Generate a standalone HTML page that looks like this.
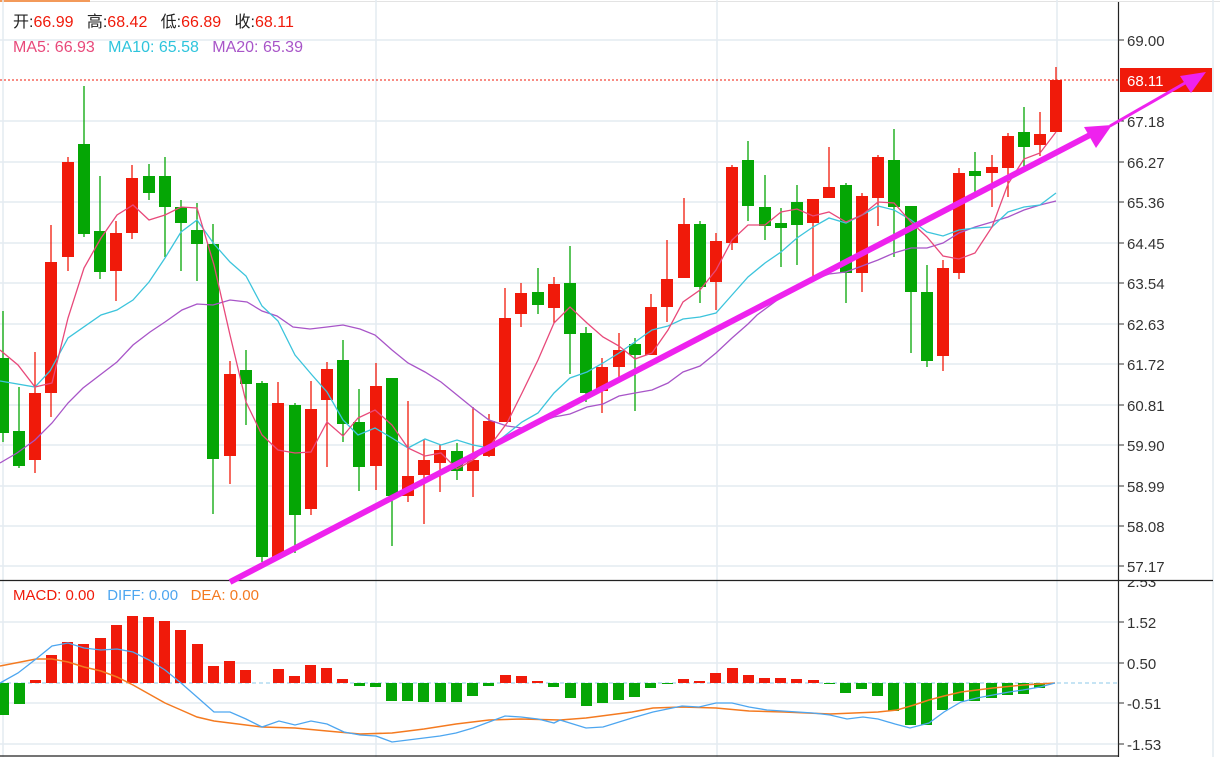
<!DOCTYPE html>
<html><head><meta charset="utf-8"><style>
html,body{margin:0;padding:0;background:#fff;}
body{width:1220px;height:757px;overflow:hidden;position:relative;font-family:"Liberation Sans","Noto Sans CJK SC",sans-serif;}
svg{position:absolute;left:0;top:0;}
.ax{font-size:15px;fill:#333;font-family:"Liberation Sans",sans-serif;}
</style></head><body>
<svg width="1220" height="757" viewBox="0 0 1220 757">
<defs><clipPath id="mc"><rect x="1119" y="581" width="100" height="176"/></clipPath></defs>
<line x1="0" y1="1.5" x2="1220" y2="1.5" stroke="#e3e3e3"/>
<line x1="0" y1="1" x2="90" y2="1" stroke="#f39a5a" stroke-width="2"/>
<g stroke="#e4ebf1" stroke-width="1.5">
<line x1="0" y1="40" x2="1118" y2="40"/><line x1="0" y1="121" x2="1118" y2="121"/>
<line x1="0" y1="162" x2="1118" y2="162"/><line x1="0" y1="202" x2="1118" y2="202"/>
<line x1="0" y1="243" x2="1118" y2="243"/><line x1="0" y1="283" x2="1118" y2="283"/>
<line x1="0" y1="324" x2="1118" y2="324"/><line x1="0" y1="364" x2="1118" y2="364"/>
<line x1="0" y1="405" x2="1118" y2="405"/><line x1="0" y1="445" x2="1118" y2="445"/>
<line x1="0" y1="486" x2="1118" y2="486"/><line x1="0" y1="526" x2="1118" y2="526"/>
<line x1="0" y1="566" x2="1118" y2="566"/>
<line x1="0" y1="622" x2="1118" y2="622"/><line x1="0" y1="663" x2="1118" y2="663"/>
<line x1="0" y1="703" x2="1118" y2="703"/><line x1="0" y1="744" x2="1118" y2="744"/>
<line x1="3" y1="0" x2="3" y2="757"/><line x1="376" y1="0" x2="376" y2="757"/>
<line x1="717" y1="0" x2="717" y2="757"/><line x1="1057" y1="0" x2="1057" y2="757"/>
<line x1="1213" y1="0" x2="1213" y2="757"/>
</g>
<line x1="1118.5" y1="2" x2="1118.5" y2="757" stroke="#222" stroke-width="1.2"/>
<line x1="0" y1="580.5" x2="1213" y2="580.5" stroke="#222" stroke-width="1.2"/>
<line x1="0" y1="756" x2="1118" y2="756" stroke="#222" stroke-width="1.2"/>
<g stroke="#333"><line x1="1118" y1="40" x2="1124" y2="40"/><line x1="1118" y1="121" x2="1124" y2="121"/><line x1="1118" y1="162" x2="1124" y2="162"/><line x1="1118" y1="202" x2="1124" y2="202"/><line x1="1118" y1="243" x2="1124" y2="243"/><line x1="1118" y1="283" x2="1124" y2="283"/><line x1="1118" y1="324" x2="1124" y2="324"/><line x1="1118" y1="364" x2="1124" y2="364"/><line x1="1118" y1="405" x2="1124" y2="405"/><line x1="1118" y1="445" x2="1124" y2="445"/><line x1="1118" y1="486" x2="1124" y2="486"/><line x1="1118" y1="526" x2="1124" y2="526"/><line x1="1118" y1="566" x2="1124" y2="566"/><line x1="1118" y1="622" x2="1124" y2="622"/><line x1="1118" y1="663" x2="1124" y2="663"/><line x1="1118" y1="703" x2="1124" y2="703"/><line x1="1118" y1="744" x2="1124" y2="744"/></g>
<g class="ax">
<text x="1127" y="46">69.00</text><text x="1127" y="127">67.18</text><text x="1127" y="168">66.27</text>
<text x="1127" y="208">65.36</text><text x="1127" y="249">64.45</text><text x="1127" y="289">63.54</text>
<text x="1127" y="330">62.63</text><text x="1127" y="370">61.72</text><text x="1127" y="411">60.81</text>
<text x="1127" y="451">59.90</text><text x="1127" y="492">58.99</text><text x="1127" y="532">58.08</text>
<text x="1127" y="572">57.17</text><text x="1127" y="587" clip-path="url(#mc)">2.53</text>
<text x="1127" y="628">1.52</text><text x="1127" y="669">0.50</text><text x="1127" y="709">-0.51</text><text x="1127" y="750">-1.53</text>
</g>
<line x1="0" y1="80" x2="1118" y2="80" stroke="#f01a0a" stroke-dasharray="2,2"/>
<rect x="1120" y="68" width="92" height="24" fill="#f01a0a"/>
<text x="1127" y="86" font-size="15" fill="#fff" font-family="Liberation Sans,sans-serif">68.11</text>
<g fill="#f01a0a" stroke="#f01a0a" stroke-width="1.3">
<line x1="35" y1="352" x2="35" y2="473"/><rect x="29" y="393" width="12" height="67" stroke="none"/>
<line x1="51" y1="225" x2="51" y2="417"/><rect x="45" y="262" width="12" height="131" stroke="none"/>
<line x1="68" y1="157" x2="68" y2="271"/><rect x="62" y="162" width="12" height="95" stroke="none"/>
<line x1="116" y1="221" x2="116" y2="301"/><rect x="110" y="233" width="12" height="38" stroke="none"/>
<line x1="132" y1="165" x2="132" y2="239"/><rect x="126" y="178" width="12" height="55" stroke="none"/>
<line x1="230" y1="361" x2="230" y2="484"/><rect x="224" y="374" width="12" height="82" stroke="none"/>
<line x1="278" y1="382" x2="278" y2="560"/><rect x="272" y="403" width="12" height="154" stroke="none"/>
<line x1="311" y1="381" x2="311" y2="515"/><rect x="305" y="409" width="12" height="100" stroke="none"/>
<line x1="327" y1="362" x2="327" y2="467"/><rect x="321" y="369" width="12" height="31" stroke="none"/>
<line x1="376" y1="363" x2="376" y2="490"/><rect x="370" y="386" width="12" height="80" stroke="none"/>
<line x1="408" y1="401" x2="408" y2="502"/><rect x="402" y="476" width="12" height="20" stroke="none"/>
<line x1="424" y1="439" x2="424" y2="524"/><rect x="418" y="460" width="12" height="15" stroke="none"/>
<line x1="440" y1="445" x2="440" y2="492"/><rect x="434" y="450" width="12" height="13" stroke="none"/>
<line x1="473" y1="407" x2="473" y2="497"/><rect x="467" y="460" width="12" height="11" stroke="none"/>
<line x1="489" y1="414" x2="489" y2="457"/><rect x="483" y="421" width="12" height="35" stroke="none"/>
<line x1="505" y1="288" x2="505" y2="422"/><rect x="499" y="318" width="12" height="104" stroke="none"/>
<line x1="521" y1="283" x2="521" y2="327"/><rect x="515" y="293" width="12" height="21" stroke="none"/>
<line x1="554" y1="277" x2="554" y2="323"/><rect x="548" y="284" width="12" height="24" stroke="none"/>
<line x1="602" y1="358" x2="602" y2="413"/><rect x="596" y="367" width="12" height="24" stroke="none"/>
<line x1="619" y1="333" x2="619" y2="380"/><rect x="613" y="350" width="12" height="17" stroke="none"/>
<line x1="651" y1="294" x2="651" y2="355"/><rect x="645" y="307" width="12" height="48" stroke="none"/>
<line x1="667" y1="240" x2="667" y2="322"/><rect x="661" y="279" width="12" height="28" stroke="none"/>
<line x1="684" y1="198" x2="684" y2="278"/><rect x="678" y="224" width="12" height="54" stroke="none"/>
<line x1="716" y1="233" x2="716" y2="310"/><rect x="710" y="241" width="12" height="41" stroke="none"/>
<line x1="732" y1="165" x2="732" y2="250"/><rect x="726" y="167" width="12" height="76" stroke="none"/>
<line x1="813" y1="199" x2="813" y2="277"/><rect x="807" y="199" width="12" height="24" stroke="none"/>
<line x1="829" y1="147" x2="829" y2="198"/><rect x="823" y="187" width="12" height="11" stroke="none"/>
<line x1="862" y1="193" x2="862" y2="292"/><rect x="856" y="196" width="12" height="77" stroke="none"/>
<line x1="878" y1="155" x2="878" y2="226"/><rect x="872" y="157" width="12" height="41" stroke="none"/>
<line x1="943" y1="260" x2="943" y2="371"/><rect x="937" y="268" width="12" height="88" stroke="none"/>
<line x1="959" y1="168" x2="959" y2="279"/><rect x="953" y="173" width="12" height="100" stroke="none"/>
<line x1="992" y1="155" x2="992" y2="207"/><rect x="986" y="167" width="12" height="6" stroke="none"/>
<line x1="1008" y1="133" x2="1008" y2="197"/><rect x="1002" y="136" width="12" height="32" stroke="none"/>
<line x1="1040" y1="112" x2="1040" y2="156"/><rect x="1034" y="134" width="12" height="11" stroke="none"/>
<line x1="1056" y1="67" x2="1056" y2="132"/><rect x="1050" y="80" width="12" height="52" stroke="none"/>
</g>
<g fill="#05a605" stroke="#05a605" stroke-width="1.3">
<line x1="3" y1="311" x2="3" y2="442"/><rect x="-3" y="358" width="12" height="75" stroke="none"/>
<line x1="19" y1="387" x2="19" y2="468"/><rect x="13" y="431" width="12" height="35" stroke="none"/>
<line x1="84" y1="86" x2="84" y2="237"/><rect x="78" y="144" width="12" height="90" stroke="none"/>
<line x1="100" y1="176" x2="100" y2="279"/><rect x="94" y="231" width="12" height="41" stroke="none"/>
<line x1="149" y1="164" x2="149" y2="200"/><rect x="143" y="176" width="12" height="17" stroke="none"/>
<line x1="165" y1="157" x2="165" y2="257"/><rect x="159" y="176" width="12" height="31" stroke="none"/>
<line x1="181" y1="200" x2="181" y2="271"/><rect x="175" y="207" width="12" height="16" stroke="none"/>
<line x1="197" y1="203" x2="197" y2="281"/><rect x="191" y="230" width="12" height="14" stroke="none"/>
<line x1="213" y1="224" x2="213" y2="514"/><rect x="207" y="244" width="12" height="215" stroke="none"/>
<line x1="246" y1="350" x2="246" y2="425"/><rect x="240" y="370" width="12" height="14" stroke="none"/>
<line x1="262" y1="381" x2="262" y2="562"/><rect x="256" y="383" width="12" height="174" stroke="none"/>
<line x1="295" y1="403" x2="295" y2="553"/><rect x="289" y="405" width="12" height="110" stroke="none"/>
<line x1="343" y1="340" x2="343" y2="442"/><rect x="337" y="360" width="12" height="64" stroke="none"/>
<line x1="359" y1="389" x2="359" y2="491"/><rect x="353" y="422" width="12" height="45" stroke="none"/>
<line x1="392" y1="378" x2="392" y2="546"/><rect x="386" y="378" width="12" height="118" stroke="none"/>
<line x1="457" y1="443" x2="457" y2="480"/><rect x="451" y="451" width="12" height="20" stroke="none"/>
<line x1="538" y1="268" x2="538" y2="314"/><rect x="532" y="292" width="12" height="13" stroke="none"/>
<line x1="570" y1="246" x2="570" y2="374"/><rect x="564" y="283" width="12" height="51" stroke="none"/>
<line x1="586" y1="327" x2="586" y2="402"/><rect x="580" y="333" width="12" height="60" stroke="none"/>
<line x1="635" y1="338" x2="635" y2="411"/><rect x="629" y="344" width="12" height="11" stroke="none"/>
<line x1="700" y1="221" x2="700" y2="303"/><rect x="694" y="224" width="12" height="63" stroke="none"/>
<line x1="748" y1="141" x2="748" y2="221"/><rect x="742" y="160" width="12" height="46" stroke="none"/>
<line x1="765" y1="175" x2="765" y2="240"/><rect x="759" y="207" width="12" height="19" stroke="none"/>
<line x1="781" y1="208" x2="781" y2="267"/><rect x="775" y="223" width="12" height="5" stroke="none"/>
<line x1="797" y1="185" x2="797" y2="265"/><rect x="791" y="202" width="12" height="23" stroke="none"/>
<line x1="846" y1="183" x2="846" y2="303"/><rect x="840" y="185" width="12" height="88" stroke="none"/>
<line x1="894" y1="129" x2="894" y2="257"/><rect x="888" y="160" width="12" height="47" stroke="none"/>
<line x1="911" y1="206" x2="911" y2="353"/><rect x="905" y="206" width="12" height="86" stroke="none"/>
<line x1="927" y1="265" x2="927" y2="367"/><rect x="921" y="292" width="12" height="69" stroke="none"/>
<line x1="975" y1="152" x2="975" y2="192"/><rect x="969" y="171" width="12" height="5" stroke="none"/>
<line x1="1024" y1="107" x2="1024" y2="167"/><rect x="1018" y="132" width="12" height="15" stroke="none"/>
</g>
<polyline fill="none" stroke="#a855c8" stroke-width="1.3" points="0,463 17,453 35,440 52,423 68,403 83,388 100,375 117,362 133,345 150,332 165,322 182,310 197,304 213,305 230,300 247,302 262,311 277,316 293,327 310,329 327,327 343,325 360,329 375,335 392,350 408,363 425,372 441,382 457,395 473,408 489,420 507,426 522,428 538,423 554,417 570,414 587,407 603,404 619,396 635,393 652,390 668,383 683,372 700,366 716,353 732,338 748,324 757,315 780,298 797,287 813,280 829,274 846,272 862,266 878,260 894,253 911,248 927,248 943,243 959,233 975,227 992,222 1008,217 1024,210 1040,205 1056,201"/>
<polyline fill="none" stroke="#3cc4dc" stroke-width="1.3" points="0,381 35,387 50,371 68,338 101,315 117,310 133,300 149,282 165,258 181,232 197,220 214,244 230,262 246,276 262,306 278,321 295,355 312,375 327,392 343,420 358,435 375,428 392,438 408,448 425,439 441,445 457,440 473,445 489,448 507,434 522,422 538,413 554,393 570,378 587,372 603,363 619,353 635,342 652,330 668,326 683,319 700,317 716,313 732,295 748,277 765,263 781,252 797,238 813,227 829,218 846,223 862,215 878,206 894,210 911,220 927,232 943,236 959,230 975,228 992,227 1008,212 1024,207 1040,205 1056,193"/>
<polyline fill="none" stroke="#e8497a" stroke-width="1.3" points="0,350 18,365 35,387 52,383 68,318 84,268 101,238 117,215 133,205 149,220 165,215 181,207 197,208 214,265 230,335 246,402 262,435 278,450 295,453 311,452 327,422 343,436 358,418 375,410 392,425 408,448 425,456 441,453 457,469 473,460 489,447 507,423 522,393 538,360 554,323 570,307 587,323 603,337 619,346 635,359 652,353 668,330 683,302 700,290 716,270 732,240 748,225 765,225 781,212 797,209 813,216 829,212 846,222 862,215 878,202 894,203 911,222 927,237 943,256 959,259 975,253 992,227 1008,184 1024,159 1040,153 1056,132"/>
<line x1="230" y1="582" x2="1090" y2="135" stroke="#ee22ee" stroke-width="6"/>
<polygon points="1112,125 1084,127 1096,148" fill="#ee22ee"/>
<line x1="1110" y1="126" x2="1192" y2="79" stroke="#ee22ee" stroke-width="3"/>
<polygon points="1206,72 1180,76 1191,93" fill="#ee22ee"/>
<line x1="0" y1="683" x2="1118" y2="683" stroke="#8cc8e8" stroke-dasharray="4,3"/>
<g fill="#f01a0a">
<rect x="30" y="680" width="11" height="3"/><rect x="46" y="655" width="11" height="28"/><rect x="62" y="642" width="11" height="41"/><rect x="78" y="644" width="11" height="39"/><rect x="95" y="638" width="11" height="45"/><rect x="111" y="625" width="11" height="58"/><rect x="127" y="616" width="11" height="67"/><rect x="143" y="617" width="11" height="66"/><rect x="159" y="621" width="11" height="62"/><rect x="175" y="630" width="11" height="53"/><rect x="192" y="644" width="11" height="39"/><rect x="208" y="666" width="11" height="17"/><rect x="224" y="661" width="11" height="22"/><rect x="240" y="670" width="11" height="13"/><rect x="273" y="669" width="11" height="14"/><rect x="289" y="676" width="11" height="7"/><rect x="305" y="665" width="11" height="18"/><rect x="321" y="668" width="11" height="15"/><rect x="337" y="679" width="11" height="4"/>
<rect x="500" y="675" width="11" height="8"/><rect x="516" y="676" width="11" height="7"/><rect x="532" y="681" width="11" height="2"/>
<rect x="678" y="679" width="11" height="4"/><rect x="694" y="681" width="11" height="2"/><rect x="710" y="673" width="11" height="10"/><rect x="727" y="668" width="11" height="15"/><rect x="743" y="675" width="11" height="8"/><rect x="759" y="678" width="11" height="5"/><rect x="775" y="678" width="11" height="5"/><rect x="791" y="679" width="11" height="4"/><rect x="808" y="680" width="11" height="3"/>
</g>
<g fill="#05a605">
<rect x="-2" y="683" width="11" height="32"/><rect x="14" y="683" width="11" height="21"/>
<rect x="354" y="683" width="11" height="3"/><rect x="370" y="683" width="11" height="4"/><rect x="386" y="683" width="11" height="18"/><rect x="402" y="683" width="11" height="18"/><rect x="418" y="683" width="11" height="19"/><rect x="435" y="683" width="11" height="19"/><rect x="451" y="683" width="11" height="19"/><rect x="467" y="683" width="11" height="13"/><rect x="483" y="683" width="11" height="3"/><rect x="548" y="683" width="11" height="4"/>
<rect x="565" y="683" width="11" height="15"/><rect x="581" y="683" width="11" height="23"/><rect x="597" y="683" width="11" height="20"/><rect x="613" y="683" width="11" height="17"/><rect x="629" y="683" width="11" height="14"/><rect x="645" y="683" width="11" height="5"/><rect x="662" y="683" width="11" height="1"/>
<rect x="824" y="683" width="11" height="1"/><rect x="840" y="683" width="11" height="10"/><rect x="856" y="683" width="11" height="6"/><rect x="872" y="683" width="11" height="13"/><rect x="888" y="683" width="11" height="28"/><rect x="905" y="683" width="11" height="42"/><rect x="921" y="683" width="11" height="42"/><rect x="937" y="683" width="11" height="27"/><rect x="953" y="683" width="11" height="18"/><rect x="969" y="683" width="11" height="18"/><rect x="986" y="683" width="11" height="15"/><rect x="1002" y="683" width="11" height="12"/><rect x="1018" y="683" width="11" height="11"/><rect x="1034" y="683" width="11" height="5"/>
</g>
<polyline fill="none" stroke="#f47a20" stroke-width="1.5" points="0,666 36,659 52,659 68,662 84,667 101,671 117,677 133,685 149,694 165,703 181,710 197,717 214,721 230,723 262,727 295,728 327,731 360,734 392,733 424,729 456,724 489,720 521,719 560,720 586,718 632,712 653,708 682,707 716,708 749,711 784,712 830,714 878,712 897,710 914,705 929,700 944,696 961,692 993,688 1023,685 1055,683"/>
<polyline fill="none" stroke="#4da6f0" stroke-width="1.3" points="0,683 18,673 36,659 52,646 68,643 84,648 101,650 117,649 133,652 149,660 165,670 181,683 197,697 214,712 230,712 246,719 262,727 279,721 295,725 311,721 327,724 344,732 360,735 376,736 392,742 408,740 424,738 440,736 456,733 473,728 489,722 505,716 521,717 538,719 554,723 560,720 586,728 603,727 632,718 653,712 682,706 699,707 716,703 732,703 749,707 767,710 813,713 830,715 847,719 863,717 878,719 895,724 910,728 929,723 944,712 961,702 977,698 993,695 1009,692 1023,690 1040,687 1055,683"/>
</svg>
<div style="position:absolute;left:13px;top:13px;font-size:16px;line-height:20px;white-space:pre;color:#222;">开:<span style="color:#f01a0a">66.99</span>   高:<span style="color:#f01a0a">68.42</span>   低:<span style="color:#f01a0a">66.89</span>   收:<span style="color:#f01a0a">68.11</span></div>
<div style="position:absolute;left:13px;top:38px;font-size:16px;line-height:20px;white-space:pre;"><span style="color:#e8497a">MA5: 66.93</span>   <span style="color:#2ec4dc">MA10: 65.58</span>   <span style="color:#a855c8">MA20: 65.39</span></div>
<div style="position:absolute;left:13px;top:587px;font-size:15px;line-height:18px;white-space:pre;"><span style="color:#f01a0a">MACD: 0.00</span>   <span style="color:#4da6f0">DIFF: 0.00</span>   <span style="color:#f47a20">DEA: 0.00</span></div>
</body></html>
